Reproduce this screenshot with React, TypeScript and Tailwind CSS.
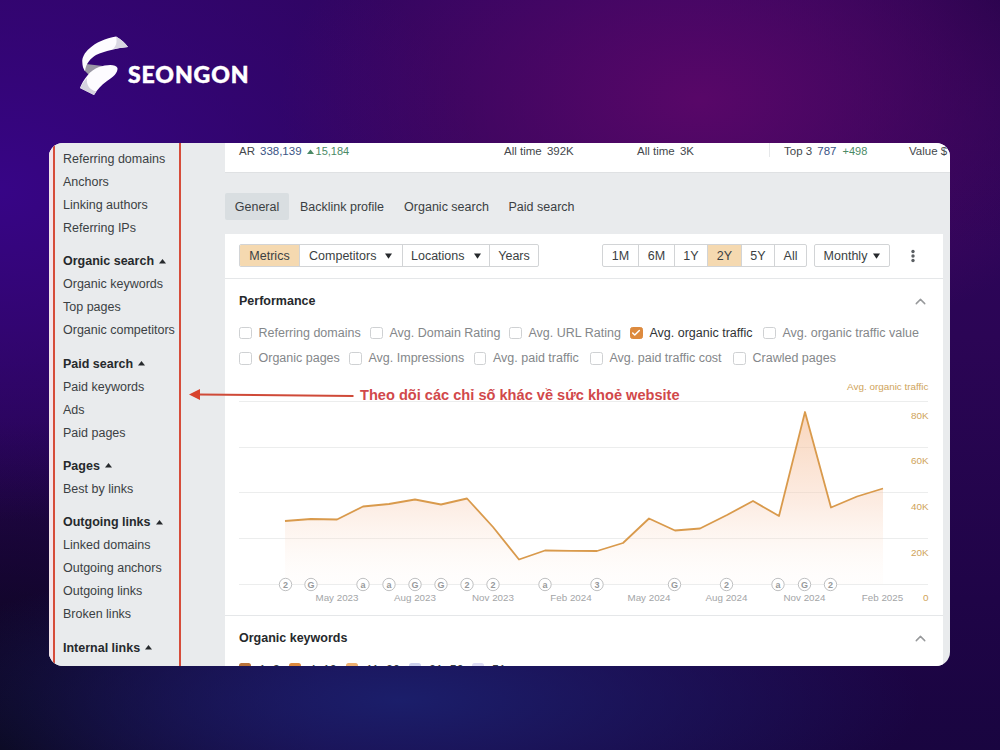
import { Check, ChevronUp } from 'lucide-react'

interface NavGroup {
  title?: string
  items: string[]
}

const NAV: NavGroup[] = [
  { items: ['Referring domains', 'Anchors', 'Linking authors', 'Referring IPs'] },
  { title: 'Organic search', items: ['Organic keywords', 'Top pages', 'Organic competitors'] },
  { title: 'Paid search', items: ['Paid keywords', 'Ads', 'Paid pages'] },
  { title: 'Pages', items: ['Best by links'] },
  { title: 'Outgoing links', items: ['Linked domains', 'Outgoing anchors', 'Outgoing links', 'Broken links'] },
  { title: 'Internal links', items: [] },
]

const TABS = [
  { label: 'General', cls: 'w-16 bg-[#d9dee1]' },
  { label: 'Backlink profile', cls: 'w-[106px]' },
  { label: 'Organic search', cls: 'w-[103px]' },
  { label: 'Paid search', cls: 'w-[87px]' },
]

const VIEWS = [
  { label: 'Metrics', cls: 'w-[60px] bg-[#f5d9b0]' },
  { label: 'Competitors', cls: 'w-[102.5px]', menu: true },
  { label: 'Locations', cls: 'w-[87.5px]', menu: true },
  { label: 'Years', cls: 'w-12' },
]

const RANGES = [
  { label: '1M', cls: 'w-9' },
  { label: '6M', cls: 'w-9' },
  { label: '1Y', cls: 'w-[33px]' },
  { label: '2Y', cls: 'w-[34px] bg-[#f5d9b0]' },
  { label: '5Y', cls: 'w-[33px]' },
  { label: 'All', cls: 'w-[31px]' },
]

const METRIC_ROWS = [
  [
    { label: 'Referring domains', cls: 'w-[131px]' },
    { label: 'Avg. Domain Rating', cls: 'w-[139px]' },
    { label: 'Avg. URL Rating', cls: 'w-[121px]' },
    { label: 'Avg. organic traffic', cls: 'w-[133px]', on: true },
    { label: 'Avg. organic traffic value', cls: 'w-[160px]' },
  ],
  [
    { label: 'Organic pages', cls: 'w-[110px]' },
    { label: 'Avg. Impressions', cls: 'w-[124.5px]' },
    { label: 'Avg. paid traffic', cls: 'w-[116.5px]' },
    { label: 'Avg. paid traffic cost', cls: 'w-[143px]' },
    { label: 'Crawled pages', cls: 'w-[110px]' },
  ],
]

const LEGEND = [
  { label: '1–3', box: 'bg-[#b9733a]', cls: 'w-[50px]' },
  { label: '4–10', box: 'bg-[#dd8a3e]', cls: 'w-[57px]' },
  { label: '11–20', box: 'bg-[#eeb070]', cls: 'w-[63px]' },
  { label: '21–50', box: 'bg-[#ccd0ec]', cls: 'w-[63px]' },
  { label: '51+', box: 'bg-[#dddcf4]', cls: 'w-[60px]' },
]

// chart coordinates, relative to the plot's own box
const POINTS: [number, number][] = [
  [60, 149], [86, 147], [112, 147.5], [138, 134.5], [164, 132], [190, 127.5], [216, 132.5], [242, 126.5],
  [268, 155], [294, 187.5], [320, 178.5], [346, 178.8], [372, 179], [398, 171], [424, 146.5], [450, 158.5],
  [475, 156.5], [502, 143], [528, 129], [554, 144], [580, 40], [606, 135.5], [632, 124.5], [658, 116.5],
]
const LINE = POINTS.map(([x, y]) => `${x},${y}`).join(' ')

const MARKS: [number, string][] = [
  [60.5, '2'], [86, 'G'], [138, 'a'], [164, 'a'], [190, 'G'], [216, 'G'], [242, '2'], [268, '2'],
  [320, 'a'], [372, '3'], [449.5, 'G'], [501.5, '2'], [553, 'a'], [579.5, 'G'], [605.5, '2'],
]

const MONTHS: [number, string][] = [
  [112, 'May 2023'], [190, 'Aug 2023'], [268, 'Nov 2023'], [346, 'Feb 2024'],
  [424, 'May 2024'], [501.5, 'Aug 2024'], [579.5, 'Nov 2024'], [657.5, 'Feb 2025'],
]

const Y_LABELS: [number, string][] = [[46.5, '80K'], [92, '60K'], [138, '40K'], [183.5, '20K'], [229, '0']]

function Triangle({ up = false }: { up?: boolean }) {
  return (
    <svg className="shrink-0" width="7" height="6" viewBox="0 0 7 6" fill="#26292c">
      <path d={up ? 'M3.5 0 L7 4.6 H0 Z' : 'M0 0.5 H7 L3.5 5.8 Z'} />
    </svg>
  )
}

function Logo() {
  return (
    <div className="flex h-[60px] items-start pl-[79px]">
      <svg width="50" height="60" viewBox="0 0 50 60">
        <path d="M7 28 L24 30 L10 39 L5 34 Z" fill="#9b98a5" />
        <path d="M37 .5 C27 2 16 7 11 12 C5 17 3 22 3.300 26 C3.500 30 4 32 6 35 C7 27 12 22 17 19 C26 15 38 12 49 11 C46 7 42 3 37 .5 Z" fill="#fdfcff" />
        <path d="M37 .5 C38 5 38 9 34 13 L49 11 C46 7 42 3 37 .5 Z" fill="#d9d7e2" />
        <path d="M1 52 C4 44 11 34 20 31 C27 28.500 37 27.500 38.500 32 C39 37 34 41 28 45 C22 49 18 54 15 59 Z" fill="#fdfcff" />
        <path d="M1 52 C3 48 5 45 8 42 C7 48 10 54 17.500 55.500 L15 59 Z" fill="#d5d3df" />
      </svg>
      <span className="-ml-px mt-[24px] font-['Lato'] text-[23px] leading-7 font-black tracking-[0.9px] text-white [-webkit-text-stroke:0.5px_white]">SEONGON</span>
    </div>
  )
}

function Sidebar() {
  return (
    <nav className="relative w-44 shrink-0 bg-[#e9ebed] pt-[5px] pl-[14px]">
      <div className="flex flex-col gap-[10.300px]">
        {NAV.map((group, i) => (
          <ul key={i} className="whitespace-nowrap text-[#3b3f43]">
            {group.title && (
              <li className="flex h-[23px] items-center gap-[5px] font-bold text-[#26292c]">
                {group.title}
                <Triangle up />
              </li>
            )}
            {group.items.map(item => (
              <li key={item} className="flex h-[23px] items-center">{item}</li>
            ))}
          </ul>
        ))}
      </div>
      {/* highlight frame around the menu */}
      <div className="absolute inset-y-0 left-0 w-[4px] bg-[#f3e4ea]" />
      <div className="absolute inset-y-0 left-[4px] w-[128px] border-x-2 border-[#d64c3a]" />
    </nav>
  )
}

function Summary() {
  return (
    <div className="flex h-[29.500px] items-start border-b border-[#dfe1e3] bg-white pl-[14px] text-[11.500px] leading-[17px] whitespace-nowrap text-[#44484c]">
      <div className="flex w-[265px] items-center">
        AR <span className="ml-[5px] text-[#3b5585]">338,139</span>
        <span className="ml-[5px] flex items-center gap-[2px] text-[11px] text-[#4b8a66]">
          <svg width="7" height="6" viewBox="0 0 7 6" fill="#4b8a66"><path d="M3.500 .5 L7 5 H0 Z" /></svg>
          15,184
        </span>
      </div>
      <div className="w-[133px]">All time <span className="ml-[2px]">392K</span></div>
      <div className="w-[133px]">All time <span className="ml-[2px]">3K</span></div>
      <div className="-ml-px h-[14px] w-[15px] border-l border-[#e6e8ea]" />
      <div className="w-[125px]">
        Top 3 <span className="ml-[2px] text-[#3b5585]">787</span>
        <span className="ml-[6px] text-[11px] text-[#4b8a66]">+498</span>
      </div>
      <div>Value <span>$</span></div>
    </div>
  )
}

function Chart() {
  return (
    <svg className="block font-['Liberation_Sans']" width="718" height="243" viewBox="0 0 718 243">
      <defs>
        <linearGradient id="area" gradientUnits="userSpaceOnUse" x1="0" y1="40" x2="0" y2="205">
          <stop offset="0" stopColor="#f4bb91" stopOpacity=".62" />
          <stop offset=".55" stopColor="#f8cdb3" stopOpacity=".38" />
          <stop offset="1" stopColor="#fdf0e8" stopOpacity=".12" />
        </linearGradient>
      </defs>
      {[29.5, 75.5, 120.5, 166.5, 212.5].map(y => (
        <path key={y} d={`M14 ${y} H703`} stroke="#eceded" />
      ))}
      <polygon points={`60,212 ${LINE} 658,212`} fill="url(#area)" />
      <polyline points={LINE} fill="none" stroke="#d99a4c" strokeWidth="1.8" strokeLinejoin="round" />
      <g textAnchor="middle">
        {MARKS.map(([x, mark]) => (
          <g key={x}>
            <circle cx={x} cy="212.5" r="6.2" fill="#fff" stroke="#bfc0c1" />
            <text x={x} y="215.7" fontSize="9" fontWeight="700" fill="#97999b">{mark}</text>
          </g>
        ))}
        {MONTHS.map(([x, month]) => (
          <text key={month} x={x} y="229" fontSize="9.8" fill="#a3a5a7">{month}</text>
        ))}
      </g>
      <g textAnchor="end" fontSize="9.9" fill="#cfa45a">
        <text x="703.5" y="18">Avg. organic traffic</text>
        {Y_LABELS.map(([y, label]) => (
          <text key={label} x="703.5" y={y}>{label}</text>
        ))}
      </g>
    </svg>
  )
}

function Toolbar() {
  return (
    <div className="flex h-[44.500px] items-center border-b border-[#e5e7e9] pl-[14px] text-[#3b3f43]">
      <div className="flex h-[23px] divide-x divide-[#d2d4d6] overflow-hidden rounded-[2px] border border-[#d2d4d6]">
        {VIEWS.map(view => (
          <div key={view.label} className={`flex items-center justify-center pt-px ${view.menu ? 'gap-[9px]' : ''} ${view.cls}`}>
            {view.label}
            {view.menu && <Triangle />}
          </div>
        ))}
      </div>
      <div className="ml-[63px] flex h-[23px] divide-x divide-[#d2d4d6] overflow-hidden rounded-[2px] border border-[#d2d4d6]">
        {RANGES.map(range => (
          <div key={range.label} className={`flex items-center justify-center pt-px ${range.cls}`}>{range.label}</div>
        ))}
      </div>
      <div className="ml-[7px] flex h-[23px] w-[76px] items-center justify-center gap-[6px] rounded-[2px] border border-[#d2d4d6] pt-px">
        Monthly
        <Triangle />
      </div>
      <svg className="ml-[21px]" width="4" height="14" viewBox="0 0 4 14" fill="#5b5f63">
        <circle cx="2" cy="2.500" r="1.700" />
        <circle cx="2" cy="7" r="1.700" />
        <circle cx="2" cy="11.500" r="1.700" />
      </svg>
    </div>
  )
}

function SectionHead({ title }: { title: string }) {
  return (
    <div className="flex h-[45px] items-center justify-between pr-[14px] pl-[14px] font-bold text-[#26292c]">
      {title}
      <ChevronUp size={17} strokeWidth={2} color="#97999b" />
    </div>
  )
}

export default function App() {
  return (
    <div className="h-[750px] w-[1000px] overflow-hidden bg-[#250450] bg-[radial-gradient(ellipse_420px_260px_at_700px_100px,#580768_0%,#58076800_100%),radial-gradient(ellipse_480px_330px_at_0px_190px,#370586_0%,#37058600_100%),radial-gradient(ellipse_520px_150px_at_400px_700px,#1b1e6a_0%,#1b1e6a00_100%),radial-gradient(ellipse_330px_330px_at_0px_750px,#090718_0%,#09071800_100%),radial-gradient(ellipse_300px_250px_at_1000px_0px,#23034a_0%,#23034a00_100%),linear-gradient(180deg,#2f0560_0%,#2b0555_45%,#1f0447_80%,#190540_100%)] pt-9 font-['Liberation_Sans',sans-serif] text-[12.500px]">
      <Logo />
      <div className="relative mt-[47px] ml-[49px] flex h-[523px] w-[901px] overflow-hidden rounded-[14px] bg-[#e9ebed]">
        <Sidebar />
        <main className="w-[725px] shrink-0">
          <Summary />
          <div className="mt-[20.500px] flex h-[27px] text-[#3b3f43]">
            {TABS.map(tab => (
              <div key={tab.label} className={`flex items-center justify-center rounded-[2px] pt-px whitespace-nowrap ${tab.cls}`}>{tab.label}</div>
            ))}
          </div>
          <section className="mt-[14px] h-[440px] w-[718px] bg-white">
            <Toolbar />
            <SectionHead title="Performance" />
            <div className="pl-[14px] text-[#84878a]">
              {METRIC_ROWS.map((row, i) => (
                <div key={i} className="flex h-[25.500px] items-start">
                  {row.map(m => (
                    <div key={m.label} className={`flex items-center gap-[7px] whitespace-nowrap ${m.on ? 'text-[#303336]' : ''} ${m.cls}`}>
                      <span className={`flex size-[12.500px] shrink-0 items-center justify-center rounded-[2.500px] border ${m.on ? 'border-[#dd8a3e] bg-[#dd8a3e]' : 'border-[#cfd1d3]'}`}>
                        {m.on && <Check size={10} strokeWidth={3.5} color="#fff" />}
                      </span>
                      {m.label}
                    </div>
                  ))}
                </div>
              ))}
            </div>
            <div className="-mt-[3px]">
              <Chart />
            </div>
            <div className="border-t border-[#e5e7e9]">
              <SectionHead title="Organic keywords" />
              <div className="flex pt-[2px] pl-[14px] text-[#3b3f43]">
                {LEGEND.map(l => (
                  <div key={l.label} className={`flex h-[14px] items-start gap-2 leading-[14px] ${l.cls}`}>
                    <span className={`size-3 rounded-[2.500px] ${l.box}`} />
                    {l.label}
                  </div>
                ))}
              </div>
            </div>
          </section>
        </main>
        {/* callout pointing at the menu */}
        <div className="absolute top-[242px] left-[140px] flex items-center gap-[6px]">
          <svg width="165" height="16" viewBox="0 0 165 16">
            <path d="M9 7.500 L164.500 9" stroke="#cf4a38" strokeWidth="2" />
            <path d="M0 7.500 L11 2 V13 Z" fill="#d8432c" />
          </svg>
          <span className="text-[14.600px] leading-5 font-bold whitespace-nowrap text-[#d1484a]">Theo dõi các chỉ số khác về sức khoẻ website</span>
        </div>
      </div>
    </div>
  )
}
